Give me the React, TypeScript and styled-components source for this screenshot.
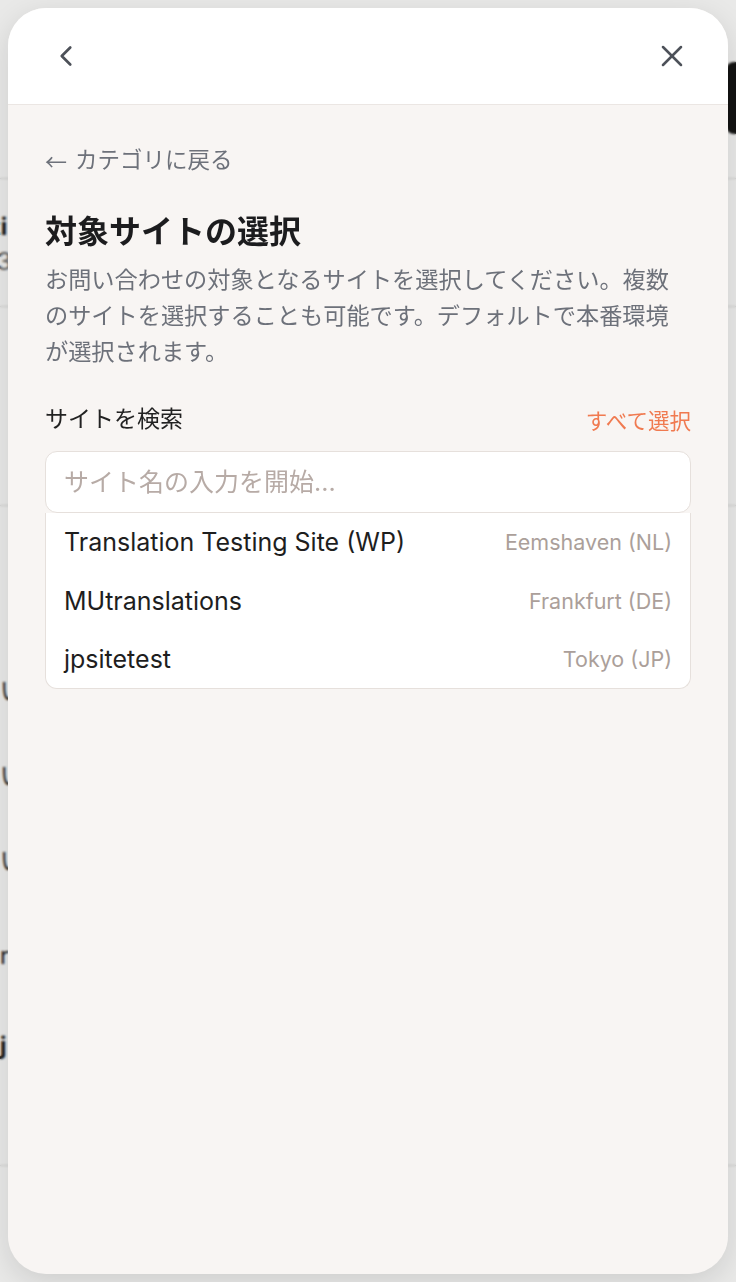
import React from 'react';
import styled, { createGlobalStyle } from 'styled-components';
import { ChevronLeft, X } from 'lucide-react';

const GlobalStyle = createGlobalStyle`
  html, body {
    margin: 0;
    padding: 0;
    background: #ffffff;
  }
  body {
    font-family: Inter, "Noto Sans CJK JP", sans-serif;
    -webkit-font-smoothing: antialiased;
  }
  * {
    box-sizing: border-box;
  }
`;

/* ---------- page behind the sheet ---------- */

const Page = styled('div')`
  width: 736px;
  height: 1282px;
  overflow: hidden;
  background: #ffffff;
  display: flex;
  flex-direction: column;
`;

const PageTop = styled('div')`
  height: 179px;
  display: flex;
  justify-content: flex-end;
  padding-top: 62px;
  border-bottom: 1px solid #dcdcdc;
`;

const DarkButton = styled('div')`
  width: 120px;
  height: 72px;
  background: #111111;
  border-radius: 8px;
  margin-right: -110px;
`;

const PageRow = styled('div')<{ $height: number }>`
  height: ${(p) => p.$height}px;
  border-bottom: 1px solid #dedede;
  display: flex;
  flex-direction: column;
  justify-content: center;
  padding-top: 4px;
  gap: 5px;
  white-space: nowrap;
  overflow: hidden;
`;

const PageText = styled('span')<{ $bold?: boolean; $muted?: boolean; $indent?: number; $top?: number }>`
  font-size: 24px;
  line-height: 30px;
  font-weight: ${(p) => (p.$bold ? 700 : 400)};
  color: ${(p) => (p.$muted ? '#666666' : '#111111')};
  text-indent: ${(p) => p.$indent ?? 0}px;
  margin-top: ${(p) => p.$top ?? 0}px;
`;

const PageList = styled('div')`
  height: 660px;
  border-bottom: 1px solid #dedede;
  display: flex;
  flex-direction: column;
  white-space: nowrap;
  overflow: hidden;
`;

const Backdrop = styled('div')`
  position: fixed;
  inset: 0;
  background: rgba(40, 36, 34, 0.1);
  backdrop-filter: blur(1px);
`;

/* ---------- sheet ---------- */

const Sheet = styled('div')`
  position: fixed;
  top: 8px;
  left: 8px;
  width: 720px;
  height: 1266px;
  border-radius: 38px;
  overflow: hidden;
  background: #f8f5f3;
  display: flex;
  flex-direction: column;
  box-shadow: 0 8px 30px rgba(0, 0, 0, 0.12);
`;

const SheetHeader = styled('header')`
  height: 97px;
  flex-shrink: 0;
  background: #ffffff;
  border-bottom: 1px solid #ebe6e3;
  display: flex;
  align-items: center;
  justify-content: space-between;
  padding: 0 32px 0 34px;
`;

const IconButton = styled('button')`
  width: 48px;
  height: 48px;
  border: none;
  background: transparent;
  padding: 0;
  display: flex;
  align-items: center;
  justify-content: center;
  color: #4d5159;
  cursor: pointer;
`;

const SheetBody = styled('div')`
  padding: 39px 37px 0;
  display: flex;
  flex-direction: column;
`;

const BackLink = styled('a')`
  font-size: 22.5px;
  line-height: 32px;
  color: #6d717a;
  text-decoration: none;
  display: flex;
  align-items: center;
  gap: 8px;
`;

const BackArrow = styled('span')`
  font-family: "Noto Sans CJK JP", sans-serif;
  font-size: 22px;
`;

const Title = styled('h2')`
  margin: 34px 0 0;
  font-size: 32px;
  line-height: 44px;
  font-weight: 700;
  color: #1c1c1e;
`;

const Description = styled('p')`
  margin: 8px 0 0;
  font-size: 23.2px;
  line-height: 36px;
  color: #6d717a;
`;

const LabelRow = styled('div')`
  margin-top: 31px;
  display: flex;
  align-items: center;
  justify-content: space-between;
`;

const Label = styled('label')`
  font-size: 23px;
  line-height: 32px;
  color: #222222;
`;

const SelectAll = styled('button')`
  border: none;
  background: transparent;
  padding: 0;
  margin-top: 4px;
  font-family: inherit;
  font-size: 21.5px;
  line-height: 32px;
  color: #f07a50;
  cursor: pointer;
`;

const SearchInput = styled('input')`
  margin-top: 14px;
  width: 100%;
  height: 62px;
  border: 1px solid #e6e0dc;
  border-radius: 12px;
  background: #ffffff;
  padding: 0 18px;
  font-family: inherit;
  font-size: 25px;
  color: #222222;
  outline: none;

  &::placeholder {
    color: #b7aba6;
  }
`;

const ResultList = styled('ul')`
  list-style: none;
  margin: 0;
  padding: 0;
  background: #ffffff;
  border: 1px solid #e6e0dc;
  border-top: none;
  border-radius: 0 0 12px 12px;
`;

const ResultItem = styled('li')`
  height: 58.4px;
  display: flex;
  align-items: center;
  justify-content: space-between;
  padding: 0 18px 0 18px;
`;

const SiteName = styled('span')`
  font-size: 25px;
  color: #1e1e1e;
`;

const SiteRegion = styled('span')`
  font-size: 21.5px;
  color: #ab9f9a;
`;

const sites = [
  { name: 'Translation Testing Site (WP)', region: 'Eemshaven (NL)' },
  { name: 'MUtranslations', region: 'Frankfurt (DE)' },
  { name: 'jpsitetest', region: 'Tokyo (JP)' },
];

export default function App() {
  return (
    <>
      <GlobalStyle />
      <Page>
        <PageTop>
          <DarkButton />
        </PageTop>
        <PageRow $height={128}>
          <PageText $bold $indent={-8}>ti</PageText>
          <PageText $muted $indent={-3}>3</PageText>
        </PageRow>
        <PageRow $height={199} />
        <PageList>
          <PageText $top={170}>い</PageText>
          <PageText $top={55}>い</PageText>
          <PageText $top={55}>い</PageText>
          <PageText $top={65}>r</PageText>
          <PageText $bold $top={60}>j</PageText>
        </PageList>
      </Page>
      <Backdrop />
      <Sheet>
        <SheetHeader>
          <IconButton aria-label="戻る">
            <ChevronLeft size={34} strokeWidth={1.9} />
          </IconButton>
          <IconButton aria-label="閉じる">
            <X size={36} strokeWidth={1.7} />
          </IconButton>
        </SheetHeader>
        <SheetBody>
          <BackLink href="#">
            <BackArrow>←</BackArrow>
            <span>カテゴリに戻る</span>
          </BackLink>
          <Title>対象サイトの選択</Title>
          <Description>
            お問い合わせの対象となるサイトを選択してください。複数のサイトを選択することも可能です。デフォルトで本番環境が選択されます。
          </Description>
          <LabelRow>
            <Label>サイトを検索</Label>
            <SelectAll>すべて選択</SelectAll>
          </LabelRow>
          <SearchInput placeholder="サイト名の入力を開始..." />
          <ResultList>
            {sites.map((site) => (
              <ResultItem key={site.name}>
                <SiteName>{site.name}</SiteName>
                <SiteRegion>{site.region}</SiteRegion>
              </ResultItem>
            ))}
          </ResultList>
        </SheetBody>
      </Sheet>
    </>
  );
}
